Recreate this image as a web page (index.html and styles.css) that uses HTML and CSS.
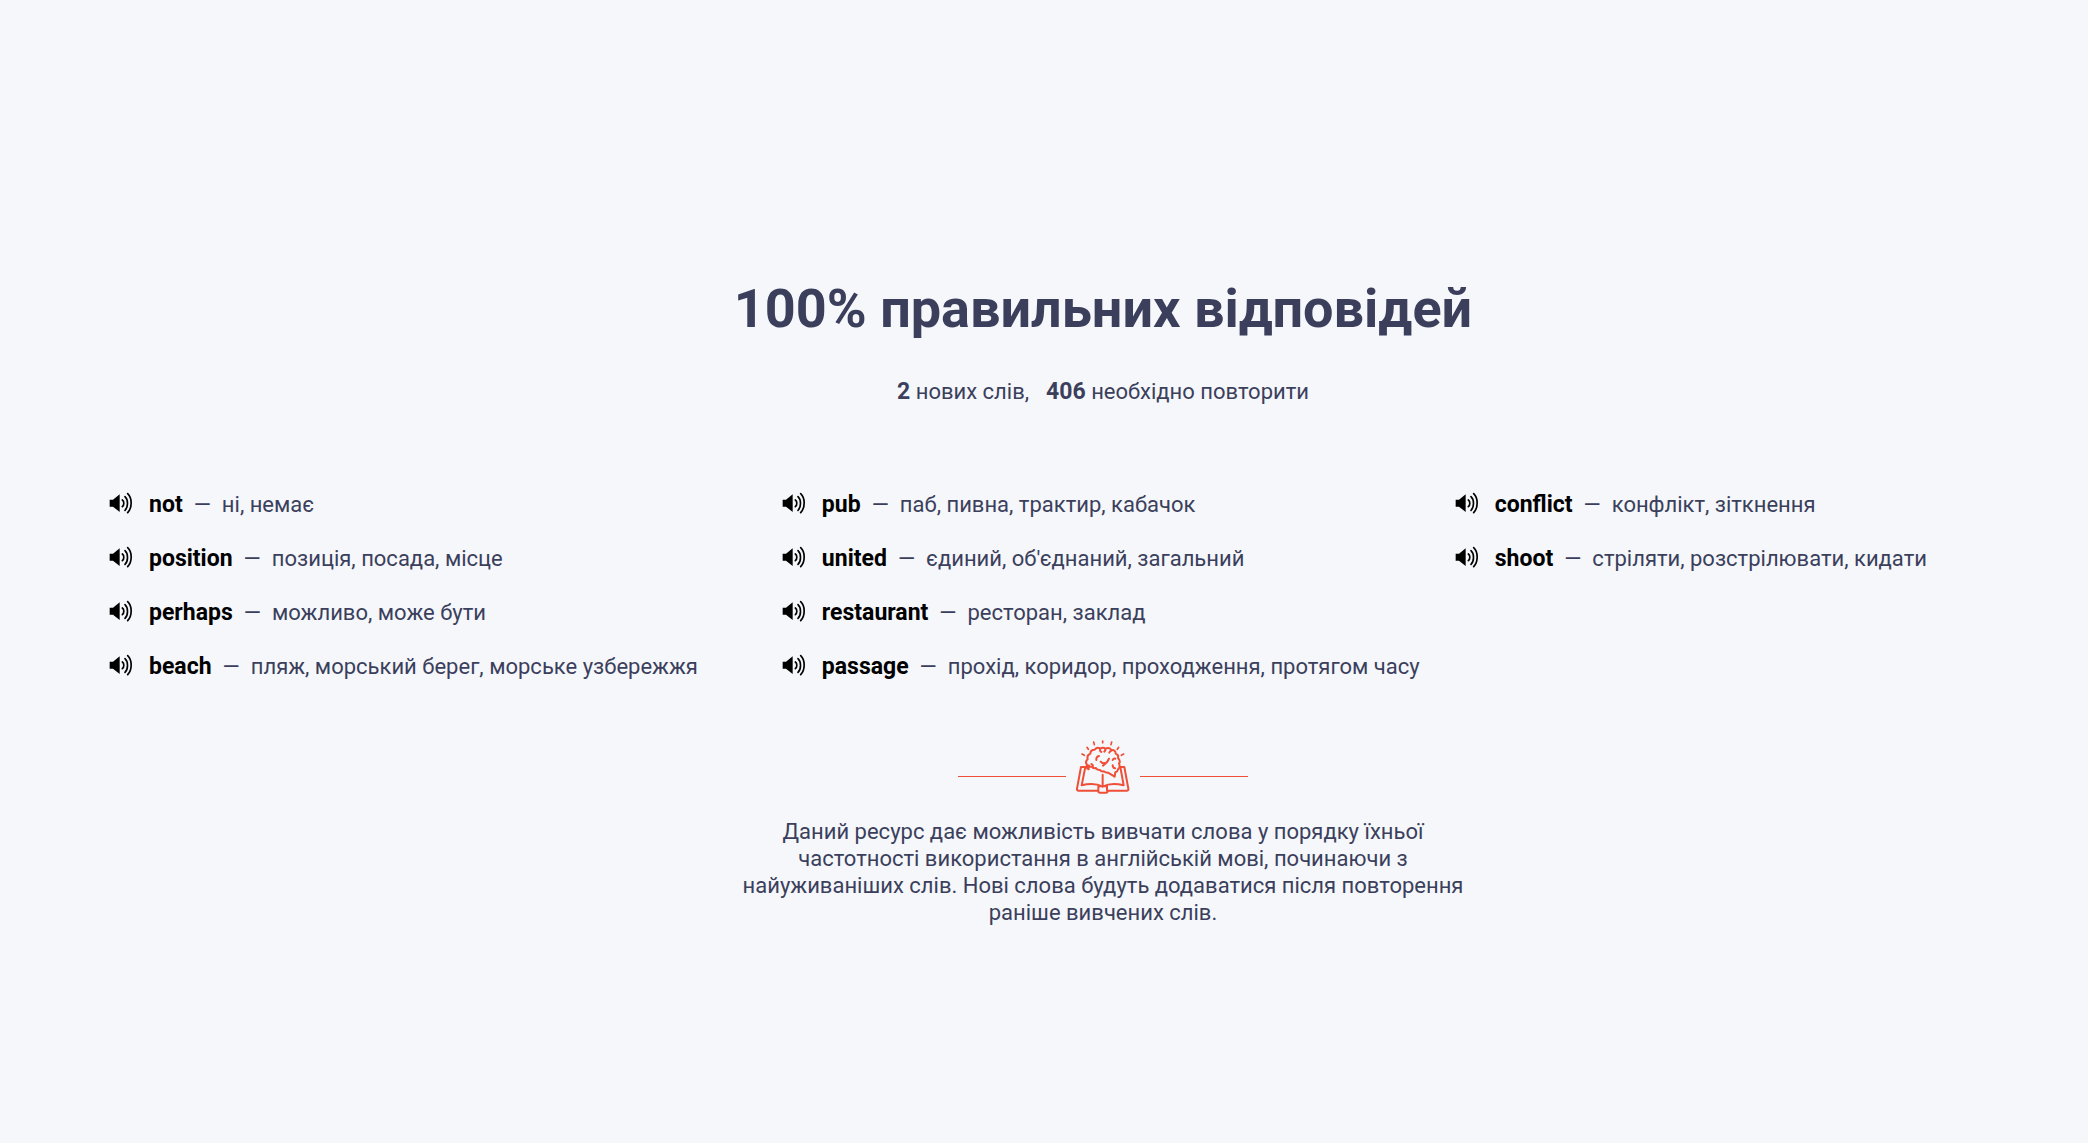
FILE: index.html
```html
<!DOCTYPE html>
<html lang="uk">
<head>
  <meta charset="utf-8">
  <meta name="viewport" content="width=device-width, initial-scale=1">
  <title>Результат</title>
  <link rel="stylesheet" href="styles.css">
</head>
<body>
  <svg class="sprite" aria-hidden="true">
    <symbol id="speaker" viewBox="0 0 72 66">
      <path d="M2 23h10L32 7v53L12 44H2z"/>
      <path class="wave" d="M40 24c6 4 6 15 0 20M48 14c10 9 10 31 0 41M56 5c14 13 14 42 0 57"/>
    </symbol>
  </svg>
  <main class="page">
    <header class="summary">
      <h1 class="title">100% правильних відповідей</h1>
      <p class="counts"><span><b>2</b> нових слів,</span><span><b>406</b> необхідно повторити</span></p>
    </header>

    <section class="words">
      <ul class="column">
        <li class="word"><button class="play" type="button" aria-label="not"><svg class="icon"><use href="#speaker"/></svg></button><b class="term">not</b><span>—</span><span>ні, немає</span></li>
        <li class="word"><button class="play" type="button" aria-label="position"><svg class="icon"><use href="#speaker"/></svg></button><b class="term">position</b><span>—</span><span>позиція, посада, місце</span></li>
        <li class="word"><button class="play" type="button" aria-label="perhaps"><svg class="icon"><use href="#speaker"/></svg></button><b class="term">perhaps</b><span>—</span><span>можливо, може бути</span></li>
        <li class="word"><button class="play" type="button" aria-label="beach"><svg class="icon"><use href="#speaker"/></svg></button><b class="term">beach</b><span>—</span><span>пляж, морський берег, морське узбережжя</span></li>
      </ul>
      <ul class="column">
        <li class="word"><button class="play" type="button" aria-label="pub"><svg class="icon"><use href="#speaker"/></svg></button><b class="term">pub</b><span>—</span><span>паб, пивна, трактир, кабачок</span></li>
        <li class="word"><button class="play" type="button" aria-label="united"><svg class="icon"><use href="#speaker"/></svg></button><b class="term">united</b><span>—</span><span>єдиний, об'єднаний, загальний</span></li>
        <li class="word"><button class="play" type="button" aria-label="restaurant"><svg class="icon"><use href="#speaker"/></svg></button><b class="term">restaurant</b><span>—</span><span>ресторан, заклад</span></li>
        <li class="word"><button class="play" type="button" aria-label="passage"><svg class="icon"><use href="#speaker"/></svg></button><b class="term">passage</b><span>—</span><span>прохід, коридор, проходження, протягом часу</span></li>
      </ul>
      <ul class="column">
        <li class="word"><button class="play" type="button" aria-label="conflict"><svg class="icon"><use href="#speaker"/></svg></button><b class="term">conflict</b><span>—</span><span>конфлікт, зіткнення</span></li>
        <li class="word"><button class="play" type="button" aria-label="shoot"><svg class="icon"><use href="#speaker"/></svg></button><b class="term">shoot</b><span>—</span><span>стріляти, розстрілювати, кидати</span></li>
      </ul>
    </section>

    <footer class="about">
      <div class="divider">
        <svg class="logo" viewBox="0 0 162 162" aria-hidden="true">
          <!-- rays -->
          <path d="M80 3v5M53 6l2 8M107 6l-2 8M33 22l4 6M128 22l-4 6M18 42l7 4M143 42l-7 4" stroke-width="5"/>
          <!-- open book -->
          <path d="M28 81H15L3 146q-1 6 5 6h58q1 6 6 6h18q5 0 6-6h56q6 0 5-6L145 81h-12M28 81L17 136q38-9 63 4 25-13 63-4L133 81M80 104v36M67 152v-13h26v13"/>
          <!-- brain -->
          <path d="M38 88q-9-5-5-14-7-9 2-16-3-14 8-17 0-12 13-12 8-10 17-3 8-6 15 0 12-5 18 4 13-1 13 11 10 4 7 13 9 9 3 17 5 11-3 17-1 7-8 9l-2 13-20-12q-8 0-12-4-8 2-12-4-10 0-12-6-10 2-12-4-8 2-10-4z"/>
          <path d="M72 28q-1 6 4 8M88 27q1 5-3 8M106 32q-5 1-6 6M61 60q-1-10 8-12M99 56q-4 11-18 21M74 65q5 6 12 4M118 56q-6-1-8 4M110 76q1 8 7 9M46 72q4 1 5 6"/>
        </svg>
      </div>
      <p class="note">Даний ресурс дає можливість вивчати слова у порядку їхньої частотності використання в англійській мові, починаючи з найуживаніших слів. Нові слова будуть додаватися після повторення раніше вивчених слів.</p>
    </footer>
  </main>
</body>
</html>
```
FILE: styles.css
```css
* {
  box-sizing: border-box;
}

body {
  margin: 0;
  background: #f5f7fb;
  color: #3b3f5c;
  font-family: Roboto, sans-serif;
  font-size: 22px;
  line-height: 27px;
}

b {
  font-size: 23px;
}

h1,
p,
ul {
  margin: 0;
  padding: 0;
}

.sprite {
  display: none;
}

.page {
  display: flex;
  flex-direction: column;
  min-height: 100vh;
  padding-top: 277px;
}

.summary,
.about {
  display: flex;
  flex-direction: column;
  align-items: center;
  padding-left: 118px;
  text-align: center;
}

.title {
  font-size: 54px;
  line-height: 64px;
  font-weight: 700;
}

.counts {
  display: flex;
  gap: 17px;
  margin-top: 37px;
}

.words {
  display: grid;
  grid-template-columns: 34fr 34fr 32fr;
  margin-top: 86px;
  padding-left: 109px;
}

.column {
  display: flex;
  flex-direction: column;
  gap: 27px;
  list-style: none;
}

.word {
  display: flex;
  gap: 11px;
  white-space: nowrap;
}

.play {
  display: flex;
  align-items: flex-start;
  width: 29px;
  padding: 1px 0 0;
  border: 0;
  background: none;
  color: #000;
  cursor: pointer;
}

.icon {
  width: 24px;
  height: 22px;
  fill: currentColor;
}

.wave {
  fill: none;
  stroke: currentColor;
  stroke-width: 5;
  stroke-linecap: round;
}

.term {
  color: #000;
}

.divider {
  display: flex;
  align-items: center;
  gap: 10px;
  margin-top: 60px;
}

.divider::before,
.divider::after {
  content: "";
  width: 108px;
  height: 1px;
  margin-top: 18px;
  background: #f04e37;
}

.logo {
  width: 54px;
  height: 54px;
  fill: none;
  stroke: #f04e37;
  stroke-width: 6;
  stroke-linecap: round;
  stroke-linejoin: round;
}

.note {
  max-width: 738px;
  margin-top: 24px;
}
```
